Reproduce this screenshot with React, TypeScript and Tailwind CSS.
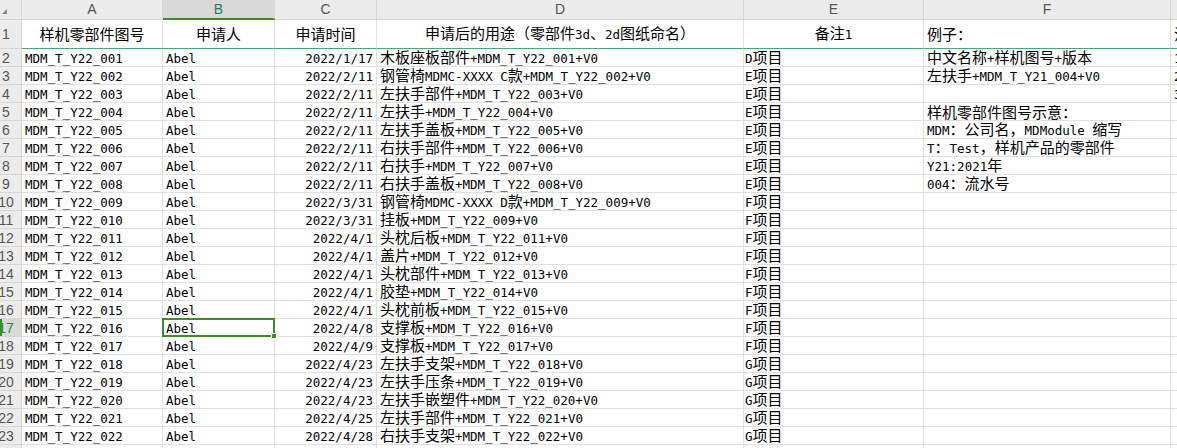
const CJK = /([\u2E80-\u9FFF\u3000-\u303F\uFF00-\uFFEF]+)/;
const isCJK = (s: string) => /^[\u2E80-\u9FFF\u3000-\u303F\uFF00-\uFFEF]+$/.test(s);

function T({ s }: { s: string }) {
  return (
    <span className="leading-[18px]">
      {s
        .split(CJK)
        .filter(Boolean)
        .map((p, i) =>
          isCJK(p) ? (
            <span key={i} className="font-['Noto_Sans_CJK_SC',sans-serif] text-[15px]">
              {p}
            </span>
          ) : (
            <span key={i} className="font-['DejaVu_Sans_Mono','Noto_Sans_CJK_SC',monospace] text-[12.5px] whitespace-pre">
              {p}
            </span>
          ),
        )}
    </span>
  );
}

const cols = ["A", "B", "C", "D", "E", "F", "G"];

type Row = [string, string, string, string, string, string, string];

const dates = [
  "2022/1/17", "2022/2/11", "2022/2/11", "2022/2/11", "2022/2/11", "2022/2/11", "2022/2/11", "2022/2/11",
  "2022/3/31", "2022/3/31", "2022/4/1", "2022/4/1", "2022/4/1", "2022/4/1", "2022/4/1", "2022/4/8",
  "2022/4/9", "2022/4/23", "2022/4/23", "2022/4/23", "2022/4/25", "2022/4/28",
];

const uses = [
  "木板座板部件+MDM_T_Y22_001+V0",
  "钢管椅MDMC-XXXX C款+MDM_T_Y22_002+V0",
  "左扶手部件+MDM_T_Y22_003+V0",
  "左扶手+MDM_T_Y22_004+V0",
  "左扶手盖板+MDM_T_Y22_005+V0",
  "右扶手部件+MDM_T_Y22_006+V0",
  "右扶手+MDM_T_Y22_007+V0",
  "右扶手盖板+MDM_T_Y22_008+V0",
  "钢管椅MDMC-XXXX D款+MDM_T_Y22_009+V0",
  "挂板+MDM_T_Y22_009+V0",
  "头枕后板+MDM_T_Y22_011+V0",
  "盖片+MDM_T_Y22_012+V0",
  "头枕部件+MDM_T_Y22_013+V0",
  "胶垫+MDM_T_Y22_014+V0",
  "头枕前板+MDM_T_Y22_015+V0",
  "支撑板+MDM_T_Y22_016+V0",
  "支撑板+MDM_T_Y22_017+V0",
  "左扶手支架+MDM_T_Y22_018+V0",
  "左扶手压条+MDM_T_Y22_019+V0",
  "左扶手嵌塑件+MDM_T_Y22_020+V0",
  "左扶手部件+MDM_T_Y22_021+V0",
  "右扶手支架+MDM_T_Y22_022+V0",
];

const notes = ["D", "E", "E", "E", "E", "E", "E", "E", "F", "F", "F", "F", "F", "F", "F", "F", "F", "G", "G", "G", "G", "G"];

const examples = [
  "中文名称+样机图号+版本",
  "左扶手+MDM_T_Y21_004+V0",
  "",
  "样机零部件图号示意：",
  "MDM：公司名，MDModule 缩写",
  "T：Test，样机产品的零部件",
  "Y21:2021年",
  "004：流水号",
];

const gcol = ["1", "2", "3"];

const rows: Row[] = dates.map((d, i) => [
  `MDM_T_Y22_${String(i + 1).padStart(3, "0")}`,
  "Abel",
  d,
  uses[i],
  `${notes[i]}项目`,
  examples[i] ?? "",
  gcol[i] ?? "",
]);

function RowHead({ n, active }: { n: number; active?: boolean }) {
  return (
    <div
      className={`relative overflow-hidden border-r border-b border-[#d6d6d6] flex items-center ${
        active ? "bg-[#d9d9d9] text-[#2f7d4f]" : "bg-[#ececec] text-[#555]"
      }`}
    >
      {active && <div className="absolute left-0 top-0 bottom-0 w-[2px] bg-[#3f8d27]" />}
      <div className="w-[12px] flex justify-center font-['Liberation_Sans',sans-serif] text-[14px] leading-none">
        <span>{n}</span>
      </div>
    </div>
  );
}

function Cell({ v, col, row }: { v: string; col: number; row: number }) {
  const right = col === 2;
  const selected = row === 17 && col === 1;
  return (
    <div
      className={`relative whitespace-nowrap border-r border-b border-[#e0e0e0] bg-white text-black flex items-center pt-[1px] ${
        right ? "justify-end pr-[3px]" : col === 4 ? "pl-[1px]" : "pl-[3px]"
      } ${selected ? "overflow-visible z-10" : "overflow-hidden"}`}
    >
      <T s={v} />
      {selected && (
        <>
          <div className="absolute -left-[1px] -top-[1px] -right-[1px] -bottom-[1px] border-2 border-[#3f8d27]" />
          <div className="absolute -right-[3px] -bottom-[3px] w-[6px] h-[6px] bg-[#3f8d27] border border-white" />
        </>
      )}
    </div>
  );
}

export default function App() {
  const header1 = ["样机零部件图号", "申请人", "申请时间", "申请后的用途（零部件3d、2d图纸命名）", "备注1", "例子：", "注"];
  return (
    <div className="w-[1177px] h-[448px] overflow-hidden bg-white">
      <div className="grid grid-cols-[22px_141px_112px_102px_367px_180px_247px_120px] grid-rows-[20px_29px_repeat(23,18px)] w-[1291px]">
        {/* column header row */}
        <div className="bg-[#ececec] border-r border-b border-[#d6d6d6] relative">
          <svg className="absolute left-0 top-0" width="12" height="20" viewBox="0 0 12 20">
            <polygon points="7,9 7,14 2,14" fill="#8a8a8a" />
          </svg>
        </div>
        {cols.map((c) => (
          <div
            key={c}
            className={`relative flex items-center justify-center border-r border-[#d6d6d6] font-['Liberation_Sans',sans-serif] text-[14px] ${
              c === "B" ? "bg-[#d9d9d9] text-[#1f7a5c] border-b-2 border-b-[#3f8d27]" : "bg-[#ececec] text-[#555] border-b border-b-[#d6d6d6]"
            }`}
          >
            {c}
          </div>
        ))}

        {/* row 1 */}
        <RowHead n={1} />
        {header1.map((h, i) => (
          <div
            key={i}
            className={`overflow-hidden whitespace-nowrap border-r border-[#e0e0e0] border-b border-b-[#4aa878] bg-white text-black flex items-center ${
              i >= 5 ? "pl-[3px]" : "justify-center"
            }`}
          >
            <T s={h} />
          </div>
        ))}

        {/* data rows */}
        {rows.map((r, ri) => {
          const n = ri + 2;
          return [
            <RowHead key={`h${n}`} n={n} active={n === 17} />,
            ...r.map((v, ci) => <Cell key={`${n}-${ci}`} v={v} col={ci} row={n} />),
          ];
        })}

        {/* row 24 partial */}
        <RowHead n={24} />
        {cols.map((c) => (
          <div key={`24${c}`} className="border-r border-b border-[#e0e0e0] bg-white" />
        ))}
      </div>
    </div>
  );
}
